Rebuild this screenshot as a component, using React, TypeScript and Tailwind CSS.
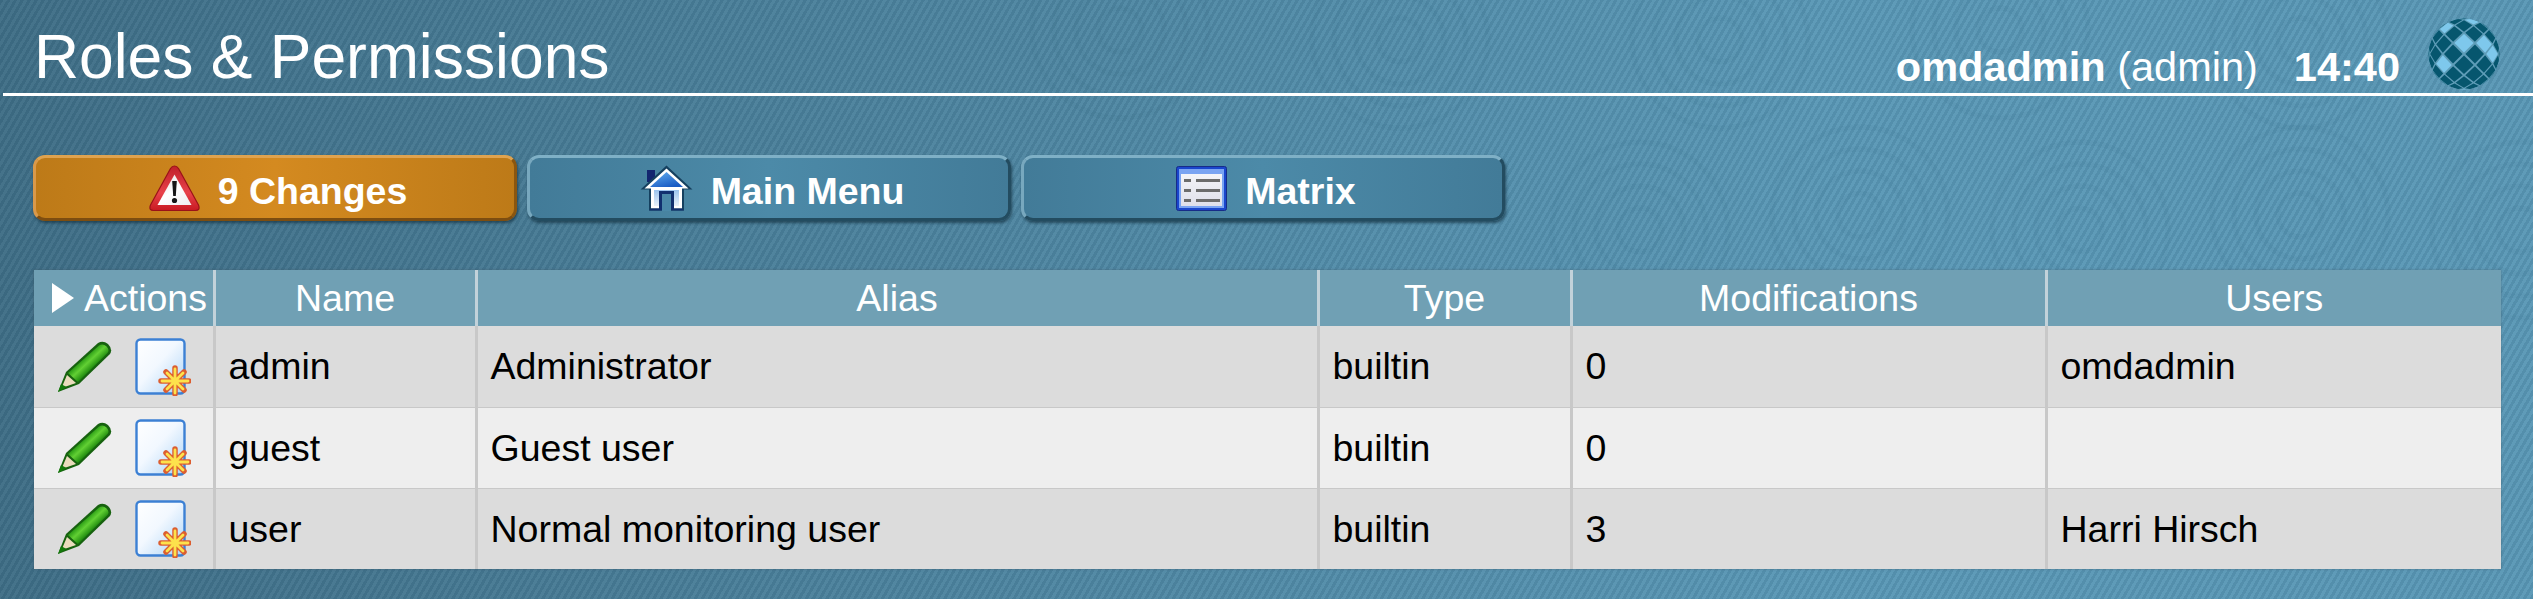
const FONT = "font-['Liberation_Sans',Arial,sans-serif]";

interface Role {
  name: string;
  alias: string;
  type: string;
  modifications: string;
  users: string;
}

const roles: Role[] = [
  { name: 'admin', alias: 'Administrator', type: 'builtin', modifications: '0', users: 'omdadmin' },
  { name: 'guest', alias: 'Guest user', type: 'builtin', modifications: '0', users: '' },
  { name: 'user', alias: 'Normal monitoring user', type: 'builtin', modifications: '3', users: 'Harri Hirsch' },
];

function WarningIcon() {
  return (
    <svg width="51" height="47" viewBox="0 0 51 47">
      <defs>
        <linearGradient id="warnEdge" x1="0" y1="0" x2="0" y2="1">
          <stop offset="0" stopColor="#c0202a" />
          <stop offset="0.6" stopColor="#e8424a" />
          <stop offset="1" stopColor="#c81a22" />
        </linearGradient>
        <linearGradient id="warnFill" x1="0.1" y1="0" x2="0.9" y2="1">
          <stop offset="0" stopColor="#e4dcdc" />
          <stop offset="0.5" stopColor="#ffffff" />
          <stop offset="1" stopColor="#f0f0f0" />
        </linearGradient>
      </defs>
      <path d="M25.5 1 Q28 1 29.5 3.5 L49.5 40 Q51.5 45.5 46.5 45.5 L4.5 45.5 Q-0.5 45.5 1.5 40 L21.5 3.5 Q23 1 25.5 1 Z" fill="url(#warnEdge)" stroke="#9a1218" strokeWidth="1.2" />
      <path d="M25.5 9.5 L42.5 40 L8.5 40 Z" fill="url(#warnFill)" />
      <path d="M23.2 16 L27.8 16 L26.8 31 L24.2 31 Z" fill="#161616" />
      <circle cx="25.5" cy="35.5" r="2.6" fill="#161616" />
    </svg>
  );
}

function HomeIcon() {
  return (
    <svg width="53" height="46" viewBox="0 0 53 46">
      <defs>
        <linearGradient id="roofFill" x1="0" y1="0" x2="0.6" y2="1">
          <stop offset="0" stopColor="#64b0f0" />
          <stop offset="1" stopColor="#1a5cc4" />
        </linearGradient>
        <linearGradient id="wallFill" x1="0" y1="0" x2="0" y2="1">
          <stop offset="0" stopColor="#9cc4ee" />
          <stop offset="1" stopColor="#e8f2fb" />
        </linearGradient>
      </defs>
      <rect x="7" y="5" width="8" height="12" fill="#13256f" />
      <path d="M26.5 0.5 L52.5 24.5 L44 24.5 L44 45.5 L9 45.5 L9 24.5 L0.5 24.5 Z" fill="#15405f" />
      <path d="M26.5 3.5 L48.5 23.5 L42 23.5 L42 43.5 L11 43.5 L11 23.5 L4.5 23.5 Z" fill="#ffffff" />
      <path d="M26.5 7 L43 22 L10 22 Z" fill="url(#roofFill)" />
      <rect x="14" y="25" width="25" height="16" fill="url(#wallFill)" />
      <path d="M19 26 H34 V45.5 H31 V29 H22 V45.5 H19 Z" fill="#11306f" />
      <rect x="22" y="29" width="9" height="17" fill="#4a88a8" />
      <path d="M11 43.5 H19 V45.5 H9 Z M34 43.5 H42 L44 45.5 H34 Z" fill="#11306f" />
    </svg>
  );
}

function MatrixIcon() {
  return (
    <svg width="51" height="45" viewBox="0 0 51 45">
      <defs>
        <linearGradient id="matrixBody" x1="0" y1="0" x2="0" y2="1">
          <stop offset="0" stopColor="#f4f4f8" />
          <stop offset="1" stopColor="#dfe0ea" />
        </linearGradient>
      </defs>
      <rect x="0.5" y="0.5" width="50" height="44" rx="2" fill="#1a46cc" stroke="#172c88" />
      <rect x="3" y="3" width="45" height="39" fill="#7aa4f2" />
      <rect x="5" y="8" width="41" height="32" fill="url(#matrixBody)" />
      <g fill="#6c6c6c">
        <rect x="8" y="13" width="7" height="3" />
        <rect x="8" y="23" width="7" height="3" />
        <rect x="8" y="33" width="7" height="3" />
        <rect x="20" y="13" width="24" height="3" />
        <rect x="20" y="23" width="24" height="3" />
        <rect x="20" y="33" width="24" height="3" />
      </g>
    </svg>
  );
}

function PencilIcon() {
  return (
    <svg width="56" height="52" viewBox="0 0 56 52">
      <defs>
        <linearGradient id="pencilBody" x1="0.35" y1="0.35" x2="0.65" y2="0.65">
          <stop offset="0" stopColor="#1a8e0c" />
          <stop offset="0.45" stopColor="#62d034" />
          <stop offset="1" stopColor="#117c06" />
        </linearGradient>
      </defs>
      <path d="M1 51 L9 31 L41 2 Q46 -1 51 3 Q56 8 53 13 L22 43 Z" fill="#17620f" />
      <path d="M11 32 L42 4.5 Q46 2 49.5 5.5 Q53 9 50.5 12 L21 41 Z" fill="url(#pencilBody)" />
      <path d="M4.5 47 L10 34 L19 42 Z" fill="#eadcbc" />
      <path d="M1 51 L4 43 L9.5 46 Z" fill="#137a0a" />
    </svg>
  );
}

function CloneIcon() {
  return (
    <svg width="56" height="58" viewBox="0 0 56 58">
      <defs>
        <linearGradient id="pageFill" x1="0" y1="0" x2="1" y2="1">
          <stop offset="0" stopColor="#ffffff" />
          <stop offset="0.45" stopColor="#f2f8ff" />
          <stop offset="1" stopColor="#a9d2f6" />
        </linearGradient>
      </defs>
      <rect x="1.5" y="1.5" width="48" height="54" rx="4" fill="url(#pageFill)" stroke="#3c80d4" strokeWidth="2.4" />
      <g stroke="#dc5e30" strokeWidth="5.5" strokeLinecap="round">
        <path d="M40 30 V56 M26 43 H54 M31 34 L49 52 M49 34 L31 52" />
      </g>
      <g stroke="#fde24c" strokeWidth="2.8" strokeLinecap="round">
        <path d="M40 31 V55 M27 43 H53 M32 35 L48 51 M48 35 L32 51" />
      </g>
    </svg>
  );
}

// Faceted ball, built from a diamond lattice pushed out towards the rim
function GlobeLogo() {
  const light = new Set(['0,-1', '2,-1', '3,0', '-2,1', '1,-4', '-2,-3', '0,5']);
  const cells: { key: string; points: string; lit: boolean }[] = [];
  const warp = (x: number, y: number): [number, number] => {
    const r = Math.min(1, Math.hypot(x, y));
    const k = r === 0 ? 1 : Math.sin((r * Math.PI) / 2) / r;
    return [36 + 36 * x * k, 36 + 36 * y * k];
  };
  for (let i = -5; i <= 5; i++) {
    for (let j = -6; j <= 6; j++) {
      if (Math.abs(i + j) % 2 !== 1) continue;
      const cx = i * 0.2;
      const cy = j * 0.2;
      const s = 0.175;
      const pts = [warp(cx, cy - s), warp(cx + s, cy), warp(cx, cy + s), warp(cx - s, cy)];
      cells.push({
        key: `${i},${j}`,
        points: pts.map((p) => p.join(',')).join(' '),
        lit: light.has(`${i},${j}`),
      });
    }
  }
  return (
    <svg width="72" height="72" viewBox="0 0 72 72">
      <defs>
        <clipPath id="globeClip">
          <circle cx="36" cy="36" r="35.5" />
        </clipPath>
      </defs>
      <g clipPath="url(#globeClip)">
        <circle cx="36" cy="36" r="36" fill="#5f9db8" />
        {cells.map((c) => (
          <polygon key={c.key} points={c.points} fill={c.lit ? '#7ec8ec' : '#06566e'} />
        ))}
      </g>
    </svg>
  );
}

function Watermark() {
  const spots = [
    [1640, 230], [1860, 215], [2080, 230], [2300, 215], [2520, 230],
    [1120, 30], [1400, 40], [1720, 40], [2000, 30], [2300, 40],
  ];
  return (
    <svg className="absolute inset-0 pointer-events-none" width="2533" height="599" viewBox="0 0 2533 599">
      {spots.map(([x, y]) => (
        <g key={`${x}-${y}`} fill="none" stroke="#1d4a62" strokeOpacity="0.04" strokeWidth="5">
          <circle cx={x} cy={y} r="22" />
          <circle cx={x} cy={y} r="44" />
          <circle cx={x} cy={y} r="66" />
          <circle cx={x} cy={y} r="88" />
        </g>
      ))}
    </svg>
  );
}

function MenuButton({ icon, label, warn }: { icon: React.ReactNode; label: string; warn?: boolean }) {
  const tone = warn
    ? 'bg-[linear-gradient(90deg,#bd7a18,#d48a20_50%,#bd7a18)] border-t-[#dfa34f] border-l-[#d9994a] border-r-[#8a5610] border-b-[#7d4d10]'
    : 'bg-[linear-gradient(90deg,#427b98,#4c8aa8_50%,#427b98)] border-t-[#7fb0c6] border-l-[#78a8be] border-r-[#234c60] border-b-[#234c60]';
  return (
    <div
      className={`flex h-[66px] w-[484px] items-center justify-center gap-[18px] rounded-[12px] border-[3px] pl-[6px] shadow-[1px_2px_3px_rgba(20,50,65,0.7)] ${tone}`}
    >
      {icon}
      <span className="pt-[6px] text-[37.5px] leading-[44px] font-bold text-white">{label}</span>
    </div>
  );
}

export default function App() {
  const cell = 'border-l-[3px] border-[#c8c8c8] px-[13px] text-left font-normal';
  const head = 'border-l-[3px] border-[#c2d2da] text-center font-normal';

  return (
    <div
      className={`relative h-[599px] w-[2533px] overflow-hidden bg-[repeating-linear-gradient(120deg,rgba(20,50,70,0.09)_0px,rgba(20,50,70,0.09)_3px,rgba(255,255,255,0.03)_3px,rgba(255,255,255,0.03)_6px),linear-gradient(90deg,#3f6e86,#5a98b6_72%,#5a98b6)] ${FONT}`}
    >
      <Watermark />
      <div className="relative">
        <header className="ml-[3px] flex h-[96px] items-end justify-between border-b-[3px] border-white pl-[31px] pr-[33px] text-white">
          <h1 className="text-[62.4px] leading-[1.17] font-normal">Roles &amp; Permissions</h1>
          <div className="flex items-end gap-[28px]">
            <div className="flex gap-[36px] text-[41.5px] leading-[52px]">
              <span>
                <b>omdadmin</b> <span className="font-normal">(admin)</span>
              </span>
              <b>14:40</b>
            </div>
            <div className="pb-[3px]">
              <GlobeLogo />
            </div>
          </div>
        </header>

        <nav className="mt-[59px] ml-[33px] flex gap-[10px]">
          <MenuButton warn icon={<WarningIcon />} label="9 Changes" />
          <MenuButton icon={<HomeIcon />} label="Main Menu" />
          <MenuButton icon={<MatrixIcon />} label="Matrix" />
        </nav>

        <table className="mt-[49px] ml-[34px] w-[2467px] table-fixed border-collapse text-[37.5px] shadow-[0_0_2px_rgba(60,80,90,0.5)]">
          <colgroup>
            <col className="w-[180px]" />
            <col className="w-[262px]" />
            <col className="w-[842px]" />
            <col className="w-[253px]" />
            <col className="w-[475px]" />
            <col />
          </colgroup>
          <thead>
            <tr className="h-[56px] bg-[#70a0b4] text-white">
              <th className="font-normal">
                <div className="flex items-center gap-[10px] pl-[18px]">
                  <span className="h-0 w-0 border-y-[15px] border-l-[22px] border-y-transparent border-l-white" />
                  <span className="whitespace-nowrap">Actions</span>
                </div>
              </th>
              <th className={head}>Name</th>
              <th className={head}>Alias</th>
              <th className={head}>Type</th>
              <th className={head}>Modifications</th>
              <th className={head}>Users</th>
            </tr>
          </thead>
          <tbody className="text-black">
            {roles.map((role, i) => (
              <tr key={role.name} className={`h-[81px] border-b border-[#c8c8c8] last:border-b-0 ${i % 2 === 0 ? 'bg-[#dcdcdc]' : 'bg-[#eeeeee]'}`}>
                <td>
                  <div className="flex items-center gap-[22px] pl-[23px]">
                    <PencilIcon />
                    <CloneIcon />
                  </div>
                </td>
                <td className={cell}>{role.name}</td>
                <td className={cell}>{role.alias}</td>
                <td className={cell}>{role.type}</td>
                <td className={cell}>{role.modifications}</td>
                <td className={cell}>{role.users}</td>
              </tr>
            ))}
          </tbody>
        </table>
      </div>
    </div>
  );
}
